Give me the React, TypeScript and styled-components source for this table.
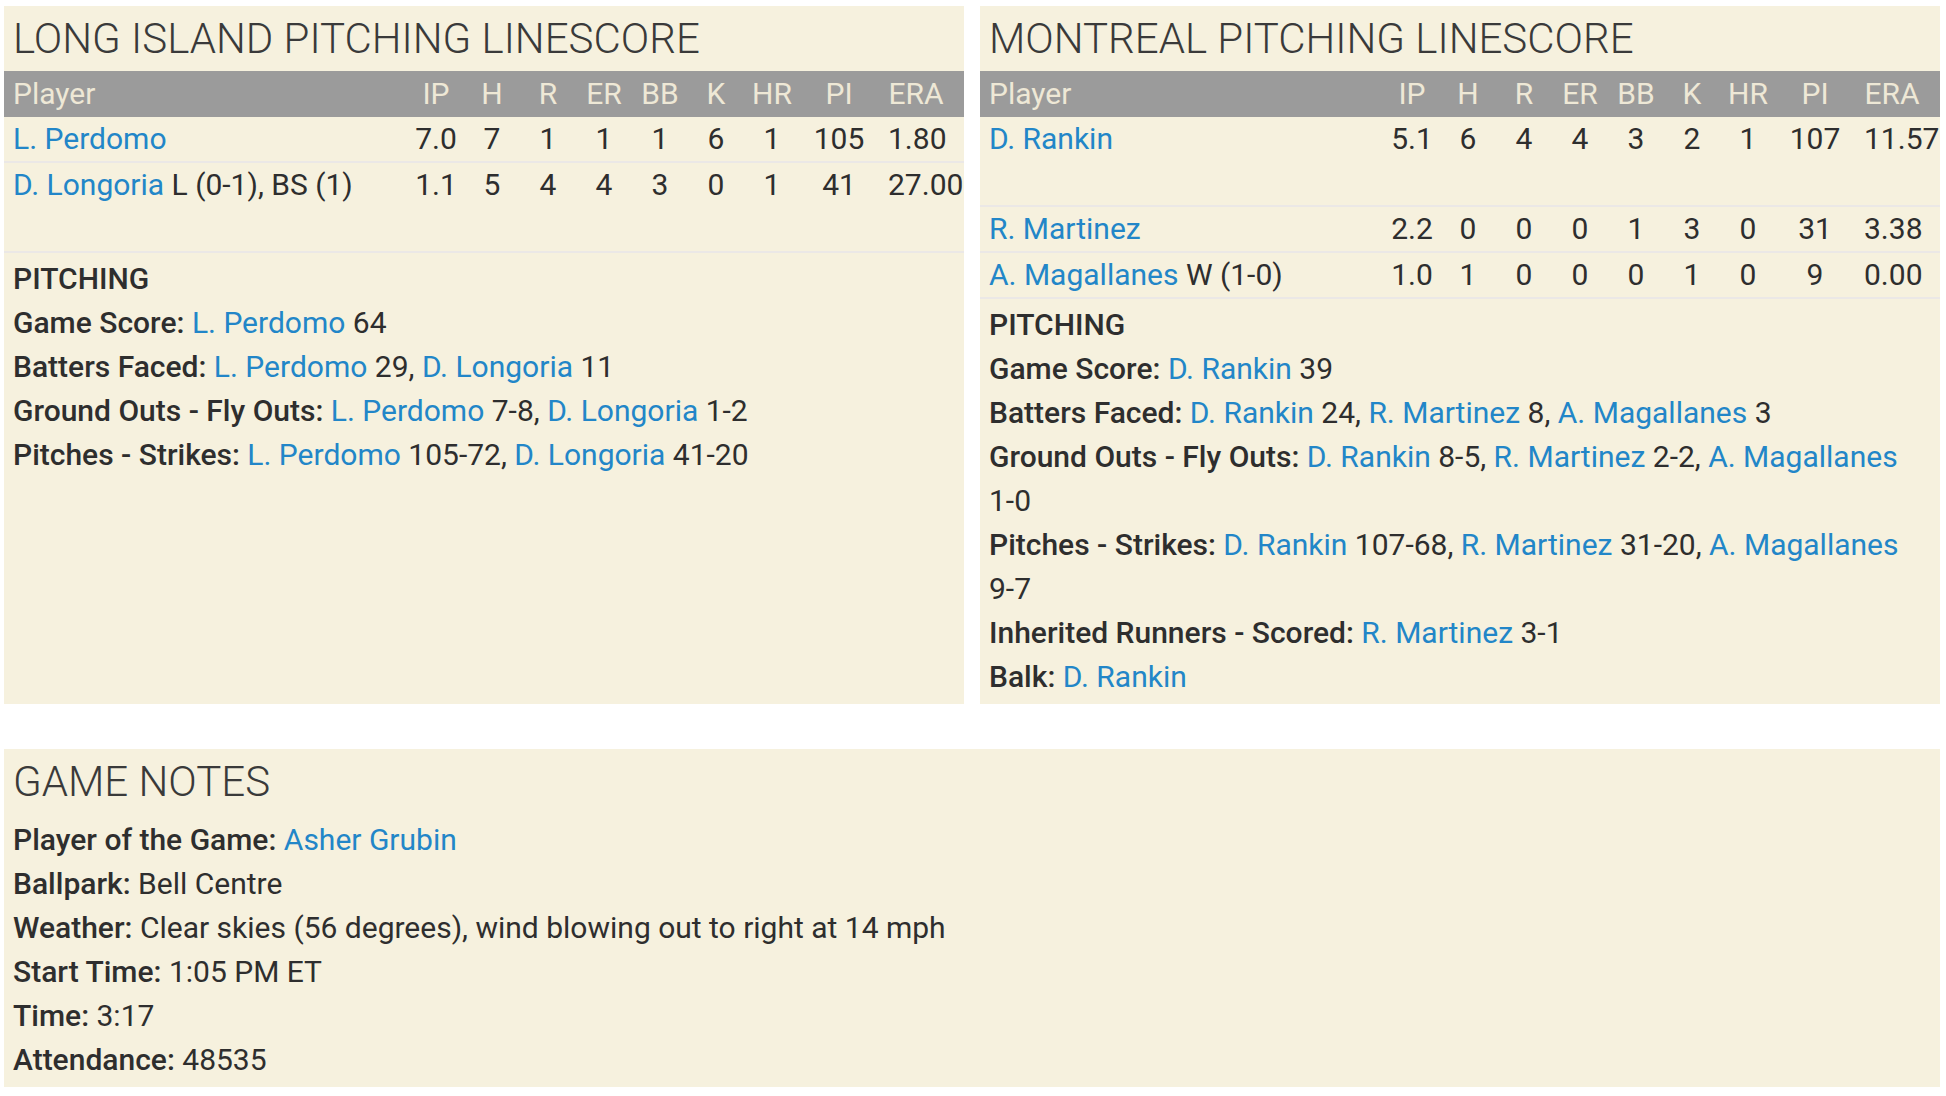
import React from 'react';
import styled, {createGlobalStyle} from 'styled-components';

const GlobalStyle = createGlobalStyle`
    body {
        margin: 0;
        background: #ffffff;
        font-family: Roboto, "Liberation Sans", sans-serif;
        color: #2e2e2e;
    }
`;

type PitcherLine = {
    name: string;
    decision?: string;
    stats: string[];
    tall?: boolean;
};

type NotePart = {text: string; link?: boolean};

type Note = {
    label: string;
    parts: NotePart[];
};

const STAT_HEADERS = ['IP', 'H', 'R', 'ER', 'BB', 'K', 'HR', 'PI', 'ERA'];

const Page = styled.div`
    display: flex;
    flex-direction: column;
    gap: 45px;
    padding: 6px 6px 7px 4px;
`;

const TopRow = styled.div`
    display: grid;
    grid-template-columns: 960px 960px;
    gap: 16px;
`;

const Panel = styled.section`
    display: flex;
    flex-direction: column;
    background: #f6f1de;
`;

const PanelTitle = styled.h2`
    margin: 0;
    padding: 0 9px;
    font-size: 42px;
    font-weight: 300;
    line-height: 65px;
    color: #3a3a3a;
    white-space: nowrap;
`;

const StatRow = styled.div<{$head?: boolean; $tall?: boolean}>`
    display: grid;
    grid-template-columns: 1fr repeat(7, 56px) 78px 76px;
    padding: 0 10px 0 9px;
    font-size: 30px;
    line-height: 44px;
    align-items: ${p => (p.$head ? 'center' : 'start')};
    height: ${p => (p.$head ? '46px' : p.$tall ? '88px' : '44px')};
    background: ${p => (p.$head ? '#9b9b9b' : 'transparent')};
    color: ${p => (p.$head ? '#eee8d6' : '#2e2e2e')};
    border-bottom: ${p => (p.$head ? 'none' : '2px solid #ebe8e6')};
`;

const NameCell = styled.div`
    white-space: nowrap;
`;

const StatCell = styled.div<{$pad?: boolean}>`
    text-align: center;
    white-space: nowrap;
    padding: ${p => (p.$pad ? '0 10px' : '0')};
`;

const PlayerLink = styled.a`
    color: #2286c8;
    text-decoration: none;
    white-space: nowrap;
    cursor: pointer;
`;

const Notes = styled.div`
    padding: 4px 9px 5px;
    font-size: 30px;
    line-height: 44px;
    color: #2e2e2e;
`;

const NotesHeading = styled.div`
    font-weight: 500;
    text-transform: uppercase;
`;

const NoteLine = styled.div``;

const Label = styled.span`
    font-weight: 500;
`;

const Token = styled.span<{$wrap?: boolean}>`
    white-space: ${p => (p.$wrap ? 'normal' : 'nowrap')};
`;

const longIsland: PitcherLine[] = [
    {name: 'L. Perdomo', stats: ['7.0', '7', '1', '1', '1', '6', '1', '105', '1.80']},
    {name: 'D. Longoria', decision: 'L (0-1), BS (1)', stats: ['1.1', '5', '4', '4', '3', '0', '1', '41', '27.00'], tall: true},
];

const montreal: PitcherLine[] = [
    {name: 'D. Rankin', stats: ['5.1', '6', '4', '4', '3', '2', '1', '107', '11.57'], tall: true},
    {name: 'R. Martinez', stats: ['2.2', '0', '0', '0', '1', '3', '0', '31', '3.38']},
    {name: 'A. Magallanes', decision: 'W (1-0)', stats: ['1.0', '1', '0', '0', '0', '1', '0', '9', '0.00']},
];

const longIslandNotes: Note[] = [
    {label: 'Game Score:', parts: [{text: 'L. Perdomo', link: true}, {text: '64'}]},
    {label: 'Batters Faced:', parts: [{text: 'L. Perdomo', link: true}, {text: '29,'}, {text: 'D. Longoria', link: true}, {text: '11'}]},
    {label: 'Ground Outs - Fly Outs:', parts: [{text: 'L. Perdomo', link: true}, {text: '7-8,'}, {text: 'D. Longoria', link: true}, {text: '1-2'}]},
    {label: 'Pitches - Strikes:', parts: [{text: 'L. Perdomo', link: true}, {text: '105-72,'}, {text: 'D. Longoria', link: true}, {text: '41-20'}]},
];

const montrealNotes: Note[] = [
    {label: 'Game Score:', parts: [{text: 'D. Rankin', link: true}, {text: '39'}]},
    {label: 'Batters Faced:', parts: [{text: 'D. Rankin', link: true}, {text: '24,'}, {text: 'R. Martinez', link: true}, {text: '8,'}, {text: 'A. Magallanes', link: true}, {text: '3'}]},
    {label: 'Ground Outs - Fly Outs:', parts: [{text: 'D. Rankin', link: true}, {text: '8-5,'}, {text: 'R. Martinez', link: true}, {text: '2-2,'}, {text: 'A. Magallanes', link: true}, {text: '1-0'}]},
    {label: 'Pitches - Strikes:', parts: [{text: 'D. Rankin', link: true}, {text: '107-68,'}, {text: 'R. Martinez', link: true}, {text: '31-20,'}, {text: 'A. Magallanes', link: true}, {text: '9-7'}]},
    {label: 'Inherited Runners - Scored:', parts: [{text: 'R. Martinez', link: true}, {text: '3-1'}]},
    {label: 'Balk:', parts: [{text: 'D. Rankin', link: true}]},
];

const gameNotes: Note[] = [
    {label: 'Player of the Game:', parts: [{text: 'Asher Grubin', link: true}]},
    {label: 'Ballpark:', parts: [{text: 'Bell Centre'}]},
    {label: 'Weather:', parts: [{text: 'Clear skies (56 degrees), wind blowing out to right at 14 mph'}]},
    {label: 'Start Time:', parts: [{text: '1:05 PM ET'}]},
    {label: 'Time:', parts: [{text: '3:17'}]},
    {label: 'Attendance:', parts: [{text: '48535'}]},
];

function NoteRow({note}: {note: Note}) {
    return (
        <NoteLine>
            <Label>{note.label}</Label>
            {note.parts.map((part, i) => (
                <React.Fragment key={i}>
                    {' '}
                    {part.link ? (
                        <PlayerLink>{part.text}</PlayerLink>
                    ) : (
                        <Token $wrap={part.text.length > 12}>{part.text}</Token>
                    )}
                </React.Fragment>
            ))}
        </NoteLine>
    );
}

function Linescore({title, pitchers, notes}: {title: string; pitchers: PitcherLine[]; notes: Note[]}) {
    return (
        <Panel>
            <PanelTitle>{title}</PanelTitle>
            <StatRow $head>
                <NameCell>Player</NameCell>
                {STAT_HEADERS.map((h, i) => (
                    <StatCell key={h} $pad={i === STAT_HEADERS.length - 1}>{h}</StatCell>
                ))}
            </StatRow>
            {pitchers.map(p => (
                <StatRow key={p.name} $tall={p.tall}>
                    <NameCell>
                        <PlayerLink>{p.name}</PlayerLink>
                        {p.decision && ` ${p.decision}`}
                    </NameCell>
                    {p.stats.map((s, i) => (
                        <StatCell key={i} $pad={i === p.stats.length - 1}>{s}</StatCell>
                    ))}
                </StatRow>
            ))}
            <Notes>
                <NotesHeading>Pitching</NotesHeading>
                {notes.map(n => (
                    <NoteRow key={n.label} note={n} />
                ))}
            </Notes>
        </Panel>
    );
}

export default function App() {
    return (
        <>
            <GlobalStyle />
            <Page>
                <TopRow>
                    <Linescore title="LONG ISLAND PITCHING LINESCORE" pitchers={longIsland} notes={longIslandNotes} />
                    <Linescore title="MONTREAL PITCHING LINESCORE" pitchers={montreal} notes={montrealNotes} />
                </TopRow>
                <Panel>
                    <PanelTitle>GAME NOTES</PanelTitle>
                    <Notes>
                        {gameNotes.map(n => (
                            <NoteRow key={n.label} note={n} />
                        ))}
                    </Notes>
                </Panel>
            </Page>
        </>
    );
}
